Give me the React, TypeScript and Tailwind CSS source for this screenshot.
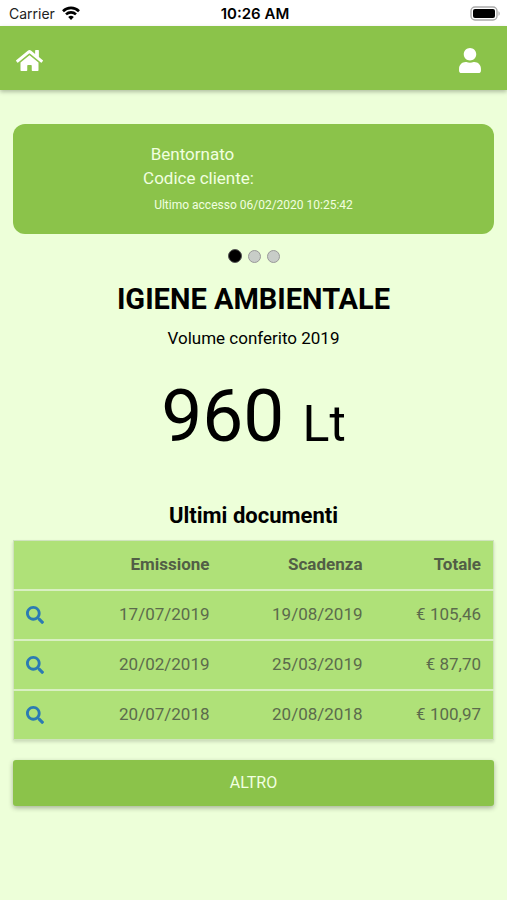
import { FaHome, FaSearch, FaUser } from "react-icons/fa";

interface Documento {
  id: number;
  emissione: string;
  scadenza: string;
  totale: string;
}

const documenti: Documento[] = [
  { id: 1, emissione: "17/07/2019", scadenza: "19/08/2019", totale: "€ 105,46" },
  { id: 2, emissione: "20/02/2019", scadenza: "25/03/2019", totale: "€ 87,70" },
  { id: 3, emissione: "20/07/2018", scadenza: "20/08/2018", totale: "€ 100,97" },
];

function StatusBar() {
  return (
    <div className="grid h-[26px] grid-cols-3 items-center bg-white pl-[9px] pr-[6px] pt-[2px] font-['Inter',sans-serif] text-sm text-[#222]">
      <div className="flex items-center gap-[7px]">
        <span>Carrier</span>
        <svg className="-mt-[2px]" width="18" height="14" viewBox="0 0 18 14" fill="none" stroke="#000" strokeWidth="2.6">
          <path d="M1 5.2a11.4 11.4 0 0 1 16 0" />
          <path d="M4 8.4a7.2 7.2 0 0 1 10 0" />
          <path d="M9 14 6.2 11a4 4 0 0 1 5.6 0z" fill="#000" stroke="none" />
        </svg>
      </div>
      <span className="text-center text-[15px] font-semibold text-black">10:26 AM</span>
      <svg className="-mt-[2px] justify-self-end" width="31" height="15" viewBox="0 0 31 15">
        <rect x="1" y="1" width="26" height="13" rx="4" fill="#fff" stroke="#aaa" strokeWidth="1.4" />
        <rect x="3" y="3" width="22" height="9" rx="2" fill="#000" />
        <path d="M28.5 5.2c1.6.6 1.6 4 0 4.6z" fill="#aaa" />
      </svg>
    </div>
  );
}

function Header() {
  return (
    <header className="flex h-16 items-center justify-between bg-[#8bc34a] pl-4 pr-[26px] pt-1 text-white shadow-[0_2px_4px_rgba(0,0,0,0.25)]">
      <a href="#home" aria-label="Home">
        <FaHome className="size-[27px]" />
      </a>
      <button type="button" aria-label="Profilo">
        <FaUser className="h-[25px] w-[22px]" />
      </button>
    </header>
  );
}

function WelcomeCard() {
  return (
    <section className="h-[110px] rounded-xl bg-[#8bc34a] pt-[18px] text-center text-[17px] leading-6 text-[#f1ffe0]">
      {/* the empty spans hold the place of the customer's name and code */}
      <p>
        Bentornato
        <span className="inline-block w-[122px]" />
      </p>
      <p>
        Codice cliente:
        <span className="inline-block w-[110px]" />
      </p>
      <p className="text-xs leading-[30px]">Ultimo accesso 06/02/2020 10:25:42</p>
    </section>
  );
}

function Dots() {
  return (
    <div className="mt-[15px] flex items-center justify-center gap-[6px]">
      <button type="button" aria-label="Pagina 1" className="size-[14px] rounded-full border border-[#555] bg-black" />
      <button type="button" aria-label="Pagina 2" className="size-[13px] rounded-full border border-[#999] bg-[#c8cdc8]" />
      <button type="button" aria-label="Pagina 3" className="size-[13px] rounded-full border border-[#999] bg-[#c8cdc8]" />
    </div>
  );
}

function DocumentsTable() {
  return (
    <table className="w-full table-fixed border-collapse border border-[#cfe3bd] bg-[#afe178] text-[17px] text-[#5b6b4c] shadow-[0_2px_3px_rgba(0,0,0,0.15)]">
      <thead>
        <tr className="h-[49px] border-b-2 border-[#d9efc2] text-right text-[#525e46]">
          <th aria-label="Dettaglio" />
          <th className="w-[152px] pr-3 font-bold">Emissione</th>
          <th className="w-[153px] pr-3 font-bold">Scadenza</th>
          <th className="w-[119px] pr-3 font-bold">Totale</th>
        </tr>
      </thead>
      <tbody>
        {documenti.map((doc) => (
          <tr key={doc.id} className="h-[50px] border-b-2 border-[#d9efc2] text-right last:border-b last:border-[#cfe3bd]">
            <td className="pl-3">
              <a href={`#documento-${doc.id}`} aria-label="Apri documento" className="block text-[#2b7bb3]">
                <FaSearch className="size-[18px]" />
              </a>
            </td>
            <td className="pr-3">{doc.emissione}</td>
            <td className="pr-3">{doc.scadenza}</td>
            <td className="pr-3">{doc.totale}</td>
          </tr>
        ))}
      </tbody>
    </table>
  );
}

export default function App() {
  return (
    <div className="min-h-screen bg-[#edffd9] font-['Roboto',sans-serif] text-black">
      <StatusBar />
      <Header />
      <main className="px-[13px] pb-8 pt-[34px]">
        <WelcomeCard />
        <Dots />
        <h1 className="mt-[18px] text-center text-[29px] font-bold leading-9">IGIENE AMBIENTALE</h1>
        <p className="mt-[9px] text-center text-[17px] leading-6">Volume conferito 2019</p>
        <p className="mt-[26px] text-center text-[73px] leading-[80px]">
          960 <span className="text-[50px]">Lt</span>
        </p>
        <h2 className="mb-2 mt-9 text-center text-[22px] font-bold leading-8">Ultimi documenti</h2>
        <DocumentsTable />
        <button
          type="button"
          className="mt-5 h-[46px] w-full rounded-[3px] bg-[#8bc34a] text-base text-[#f1ffe0] shadow-[0_2px_5px_rgba(0,0,0,0.3)]"
        >
          ALTRO
        </button>
      </main>
    </div>
  );
}
